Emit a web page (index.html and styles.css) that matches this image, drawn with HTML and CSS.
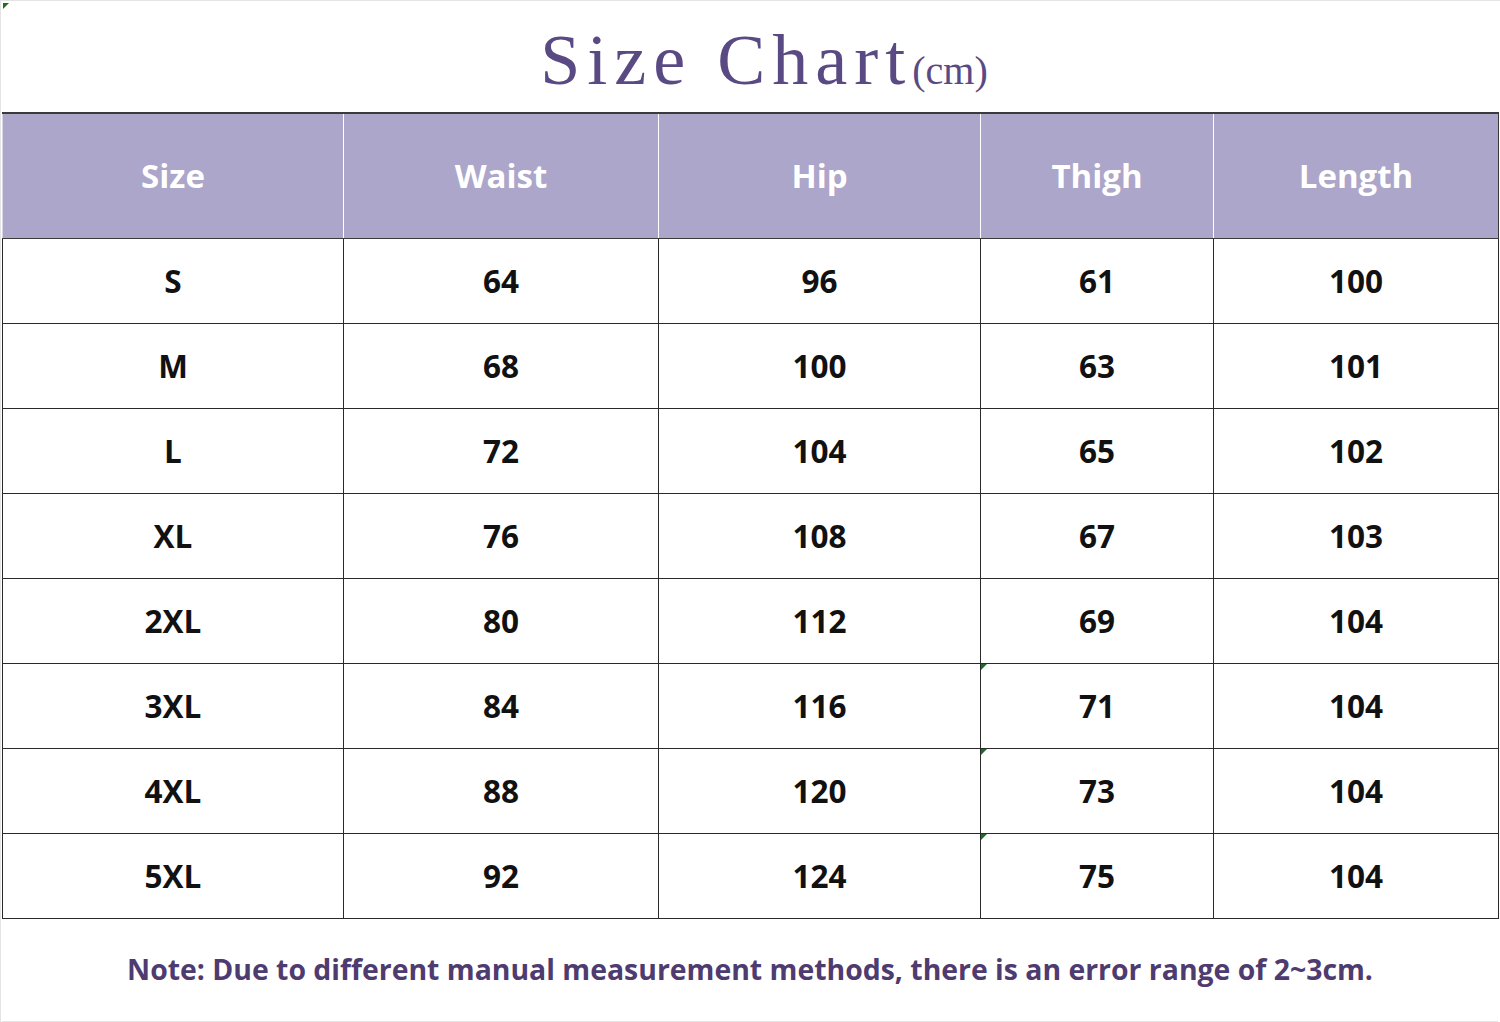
FILE: index.html
```html
<!DOCTYPE html>
<html lang="en">
<head>
<meta charset="utf-8">
<title>Size Chart</title>
<link rel="stylesheet" href="styles.css">
</head>
<body>
<div class="page">
  <span class="marker page-marker"></span>
  <h1 class="title">Size Chart<span class="unit">(cm)</span></h1>
  <table class="chart">
    <colgroup>
      <col class="c1"><col class="c2"><col class="c3"><col class="c4"><col class="c5">
    </colgroup>
    <thead>
      <tr><th>Size</th><th>Waist</th><th>Hip</th><th>Thigh</th><th>Length</th></tr>
    </thead>
    <tbody>
      <tr><td>S</td><td>64</td><td>96</td><td>61</td><td>100</td></tr>
      <tr><td>M</td><td>68</td><td>100</td><td>63</td><td>101</td></tr>
      <tr><td>L</td><td>72</td><td>104</td><td>65</td><td>102</td></tr>
      <tr><td>XL</td><td>76</td><td>108</td><td>67</td><td>103</td></tr>
      <tr><td>2XL</td><td>80</td><td>112</td><td>69</td><td>104</td></tr>
      <tr><td>3XL</td><td>84</td><td>116</td><td class="flag">71</td><td>104</td></tr>
      <tr><td>4XL</td><td>88</td><td>120</td><td class="flag">73</td><td>104</td></tr>
      <tr><td>5XL</td><td>92</td><td>124</td><td class="flag">75</td><td>104</td></tr>
    </tbody>
  </table>
  <p class="note">Note: Due to different manual measurement methods, there is an error range of 2~3cm.</p>
</div>
</body>
</html>
```
FILE: styles.css
```css
html, body {
  margin: 0;
  padding: 0;
  background: #ffffff;
}

.page {
  position: relative;
  width: 1500px;
  height: 1022px;
  box-sizing: border-box;
  padding: 1px 2px 0 1px;
  border-top: 1px solid #e4e4e4;
  border-left: 1px solid #e4e4e4;
  display: flex;
  flex-direction: column;
}

.marker {
  position: absolute;
  width: 0;
  height: 0;
  border-top: 6px solid #1f6b2a;
  border-right: 6px solid transparent;
}

.page-marker {
  top: 2px;
  left: 2px;
}

.title {
  margin: 0;
  height: 110px;
  box-sizing: border-box;
  padding: 22px 0 0 28px;
  text-align: center;
  font-family: "Liberation Serif", "DejaVu Serif", serif;
  font-weight: normal;
  font-size: 72px;
  line-height: 72px;
  letter-spacing: 7px;
  color: #5a4a84;
}

.unit {
  font-size: 40px;
  letter-spacing: 0;
}

.chart {
  width: 1496px;
  border-collapse: collapse;
  table-layout: fixed;
  font-family: "Open Sans", "Noto Sans", sans-serif;
  font-weight: bold;
  text-align: center;
}

.c1 { width: 341px; }
.c2 { width: 315px; }
.c3 { width: 322px; }
.c4 { width: 233px; }
.c5 { width: 285px; }

.chart thead tr {
  height: 125px;
}

.chart th {
  background: #aca6ca;
  color: #ffffff;
  font-size: 33px;
  font-weight: bold;
  padding: 0;
  border-top: 2px solid #3a3a3a;
  border-bottom: 1px solid #3a3a3a;
  border-left: 1px solid #ffffff;
  border-right: 1px solid #ffffff;
}

.chart th:first-child {
  border-left: 1px solid #d8d6e6;
}

.chart th:last-child {
  border-right: 1px solid #3a3a3a;
}

.chart tbody tr {
  height: 85px;
}

.chart td {
  position: relative;
  padding: 0;
  font-size: 31.5px;
  color: #111111;
  border: 1px solid #2a2a2a;
}

.chart td.flag::before {
  content: "";
  position: absolute;
  top: 0;
  left: 0;
  width: 0;
  height: 0;
  border-top: 6px solid #1f6b2a;
  border-right: 6px solid transparent;
}

.note {
  margin: 0;
  flex: 1;
  display: flex;
  align-items: center;
  justify-content: center;
  padding-bottom: 2px;
  border-bottom: 1px solid #e4e4e4;
  font-family: "Open Sans", "Noto Sans", sans-serif;
  font-weight: bold;
  font-size: 28.4px;
  color: #4e3b70;
}
```
